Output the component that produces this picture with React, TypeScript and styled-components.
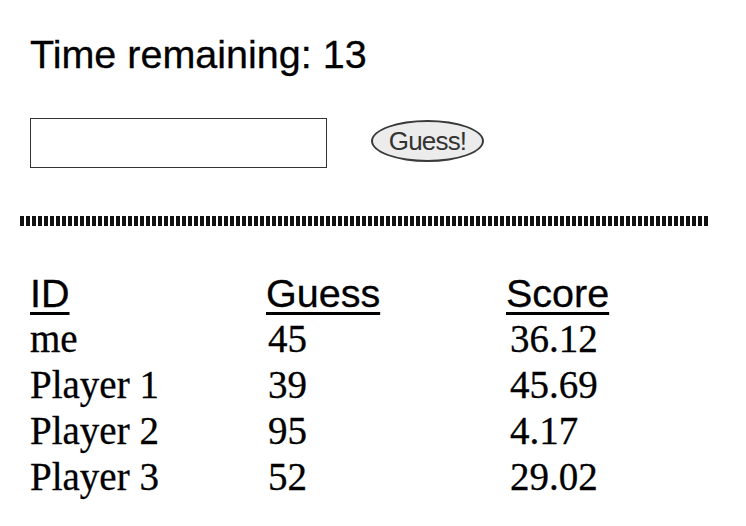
import React, { useState } from 'react';
import styled, { createGlobalStyle } from 'styled-components';

type Player = {
  id: string;
  guess: number;
  score: string;
};

const players: Player[] = [
  { id: 'me', guess: 45, score: '36.12' },
  { id: 'Player 1', guess: 39, score: '45.69' },
  { id: 'Player 2', guess: 95, score: '4.17' },
  { id: 'Player 3', guess: 52, score: '29.02' },
];

export default function App(): JSX.Element {
  const [guess, setGuess] = useState('');

  return (
    <>
      <GlobalStyle />
      <Page>
        <Timer>Time remaining: 13</Timer>
        <GuessRow>
          <GuessInput
            type="text"
            value={guess}
            onChange={(event) => setGuess(event.target.value)}
          />
          <GuessButton type="button">Guess!</GuessButton>
        </GuessRow>
        <Divider />
        <ScoreTable>
          <HeaderCell>ID</HeaderCell>
          <HeaderCell>Guess</HeaderCell>
          <HeaderCell>Score</HeaderCell>
          {players.map((player) => (
            <React.Fragment key={player.id}>
              <Cell>{player.id}</Cell>
              <Cell offset={2}>{player.guess}</Cell>
              <Cell offset={4}>{player.score}</Cell>
            </React.Fragment>
          ))}
        </ScoreTable>
      </Page>
    </>
  );
}

const GlobalStyle = createGlobalStyle`
  html, body {
    margin: 0;
    background: #ffffff;
  }
`;

const Page = styled.div`
  padding: 0 20px;
  display: flex;
  flex-direction: column;
`;

const Timer = styled.h1`
  margin: 32px 0 0 10px;
  font-family: 'Liberation Sans', Arial, sans-serif;
  font-weight: 400;
  font-size: 39.5px;
  line-height: 44px;
  color: #000;
  -webkit-text-stroke: 0.3px #000;
`;

const GuessRow = styled.div`
  display: flex;
  align-items: center;
  gap: 44px;
  margin: 42px 0 0 10px;
`;

const GuessInput = styled.input`
  box-sizing: border-box;
  width: 297px;
  height: 50px;
  border: 1.5px solid #333;
  border-radius: 0;
  padding: 0 8px;
  font-family: 'Liberation Sans', Arial, sans-serif;
  font-size: 22px;
  outline: none;
`;

const GuessButton = styled.button`
  box-sizing: border-box;
  width: 113px;
  height: 42px;
  margin-top: -4px;
  border: 2px solid #3a3a3a;
  border-radius: 50%;
  background: #ececec;
  color: #333;
  font-family: 'Liberation Sans', Arial, sans-serif;
  font-size: 26px;
  letter-spacing: -0.8px;
  padding: 0;
`;

const Divider = styled.div`
  margin-top: 48px;
  width: 688px;
  height: 10px;
  background: repeating-linear-gradient(
    90deg,
    #111 0 4px,
    #ffffff 4px 6px
  );
`;

const ScoreTable = styled.div`
  display: grid;
  grid-template-columns: 236px 240px auto;
  margin: 44px 0 0 10px;
`;

const HeaderCell = styled.div`
  font-family: 'Liberation Sans', Arial, sans-serif;
  font-size: 39.5px;
  line-height: 46px;
  color: #000;
  -webkit-text-stroke: 0.3px #000;
  text-decoration: underline;
  text-decoration-thickness: 3px;
  text-underline-offset: 5px;
`;

const Cell = styled.div<{ offset?: number }>`
  font-family: 'Liberation Serif', 'Times New Roman', serif;
  font-size: 39px;
  line-height: 46px;
  color: #000;
  -webkit-text-stroke: 0.3px #000;
  padding-left: ${(props) => props.offset ?? 0}px;
`;
